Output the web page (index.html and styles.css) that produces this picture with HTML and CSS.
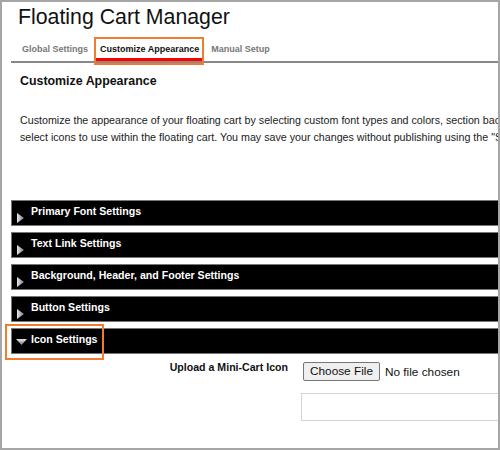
FILE: index.html
```html
<!DOCTYPE html>
<html lang="en">
<head>
<meta charset="utf-8">
<title>Floating Cart Manager</title>
<link rel="stylesheet" href="styles.css">
</head>
<body>
<div class="frame">
  <div class="page">
    <h1 class="title">Floating Cart Manager</h1>
    <nav class="tabs">
      <a class="tab">Global Settings</a>
      <a class="tab tab-active">Customize Appearance<span class="callout callout-tab"></span></a>
      <a class="tab">Manual Setup</a>
    </nav>
    <section class="content">
      <h2 class="heading">Customize Appearance</h2>
      <p class="intro">
        <span class="line">Customize the appearance of your floating cart by selecting custom font types and colors, section background colors, and</span>
        <span class="line">select icons to use within the floating cart. You may save your changes without publishing using the "Save" button.</span>
      </p>
      <div class="accordion">
        <div class="bar">
          <svg class="arrow" width="12" height="24" viewBox="0 0 12 24"><defs><linearGradient id="gr" x1="0" y1="0" x2="1" y2="0"><stop offset="0" stop-color="#e6e6e6"/><stop offset="1" stop-color="#7a7a7a"/></linearGradient></defs><polygon points="1,12 8,17 1,22" fill="url(#gr)"/></svg>
          <span class="bar-text">Primary Font Settings</span>
        </div>
        <div class="bar">
          <svg class="arrow" width="12" height="24" viewBox="0 0 12 24"><polygon points="1,12 8,17 1,22" fill="url(#gr)"/></svg>
          <span class="bar-text">Text Link Settings</span>
        </div>
        <div class="bar">
          <svg class="arrow" width="12" height="24" viewBox="0 0 12 24"><polygon points="1,12 8,17 1,22" fill="url(#gr)"/></svg>
          <span class="bar-text">Background, Header, and Footer Settings</span>
        </div>
        <div class="bar">
          <svg class="arrow" width="12" height="24" viewBox="0 0 12 24"><polygon points="1,12 8,17 1,22" fill="url(#gr)"/></svg>
          <span class="bar-text">Button Settings</span>
        </div>
        <div class="bar">
          <svg class="arrow" width="12" height="24" viewBox="0 0 12 24"><defs><linearGradient id="gd" x1="0" y1="0" x2="0" y2="1"><stop offset="0" stop-color="#e6e6e6"/><stop offset="1" stop-color="#7a7a7a"/></linearGradient></defs><polygon points="0,10 11,10 5.5,16" fill="url(#gd)"/></svg>
          <span class="bar-text">Icon Settings</span>
          <span class="callout callout-bar"></span>
        </div>
        <div class="field-row">
          <label class="field-label">Upload a Mini-Cart Icon</label>
          <div class="field-control">
            <div class="file">
              <button class="file-btn" type="button">Choose File</button>
              <span class="file-name">No file chosen</span>
            </div>
            <div class="text-input"></div>
          </div>
        </div>
      </div>
    </section>
  </div>
</div>
</body>
</html>
```

FILE: styles.css
```css
* { box-sizing: border-box; }

body {
  margin: 0;
  font-family: "Liberation Sans", Arial, sans-serif;
  background: #fff;
}

.frame {
  width: 500px;
  height: 450px;
  border: 2px solid #a6a6a6;
  overflow: hidden;
  background: #fff;
}

.page {
  width: 720px;
}

.title {
  margin: 0;
  padding: 3px 0 0 16px;
  font-size: 21.3px;
  font-weight: normal;
  line-height: 24px;
  color: #111;
}

.tabs {
  display: flex;
  gap: 4px;
  margin: 12px 0 0 9px;
  padding-left: 7px;
  border-bottom: 2px solid #888;
}

.tab {
  position: relative;
  padding: 3px 4px;
  font-size: 9px;
  font-weight: bold;
  line-height: 11px;
  color: #777;
  border-bottom: 3px solid transparent;
  white-space: nowrap;
}

.tab-active {
  color: #111;
  border-bottom-color: #f00;
}

.callout {
  position: absolute;
  border: 2px solid #ed7d31;
  pointer-events: none;
}

.callout-tab {
  top: -4px;
  bottom: -7px;
  left: -2px;
  right: -1px;
}

.content {
  padding-left: 18px;
}

.heading {
  margin: 11px 0 0;
  font-size: 12.4px;
  font-weight: bold;
  line-height: 15px;
  color: #111;
}

.intro {
  margin: 23px 0 0;
  font-size: 10.7px;
  line-height: 17px;
  color: #222;
}

.line {
  display: block;
  white-space: nowrap;
}

.accordion {
  margin: 54px 0 0 -9px;
}

.bar {
  position: relative;
  display: flex;
  align-items: flex-start;
  height: 26px;
  margin-bottom: 6px;
  padding-left: 4px;
  background: #000;
  border: 1px solid #777;
  color: #fff;
}

.arrow {
  flex: none;
  margin-right: 3px;
}

.bar-text {
  padding-top: 3px;
  font-size: 10.6px;
  font-weight: bold;
  line-height: 14px;
  white-space: nowrap;
}

.callout-bar {
  top: -5px;
  left: -7px;
  width: 99px;
  height: 36px;
}

.field-row {
  display: flex;
  align-items: flex-start;
  gap: 13px;
  margin-top: 6px;
  padding-left: 89px;
}

.field-label {
  width: 188px;
  text-align: right;
  font-size: 10.6px;
  font-weight: bold;
  line-height: 14px;
  color: #111;
}

.field-control {
  display: flex;
  flex-direction: column;
}

.file {
  display: flex;
  align-items: center;
  margin: 2px 0 0 2px;
}

.file-btn {
  height: 19px;
  padding: 0 6px;
  font-family: "Liberation Sans", Arial, sans-serif;
  font-size: 11.8px;
  line-height: 17px;
  color: #111;
  background: #efefef;
  border: 1px solid #767676;
  border-radius: 2px;
}

.file-name {
  margin-left: 5px;
  font-size: 11.8px;
  color: #111;
}

.text-input {
  width: 300px;
  height: 28px;
  margin-top: 12px;
  border: 1px solid #d4d4d4;
  background: #fff;
}
```
